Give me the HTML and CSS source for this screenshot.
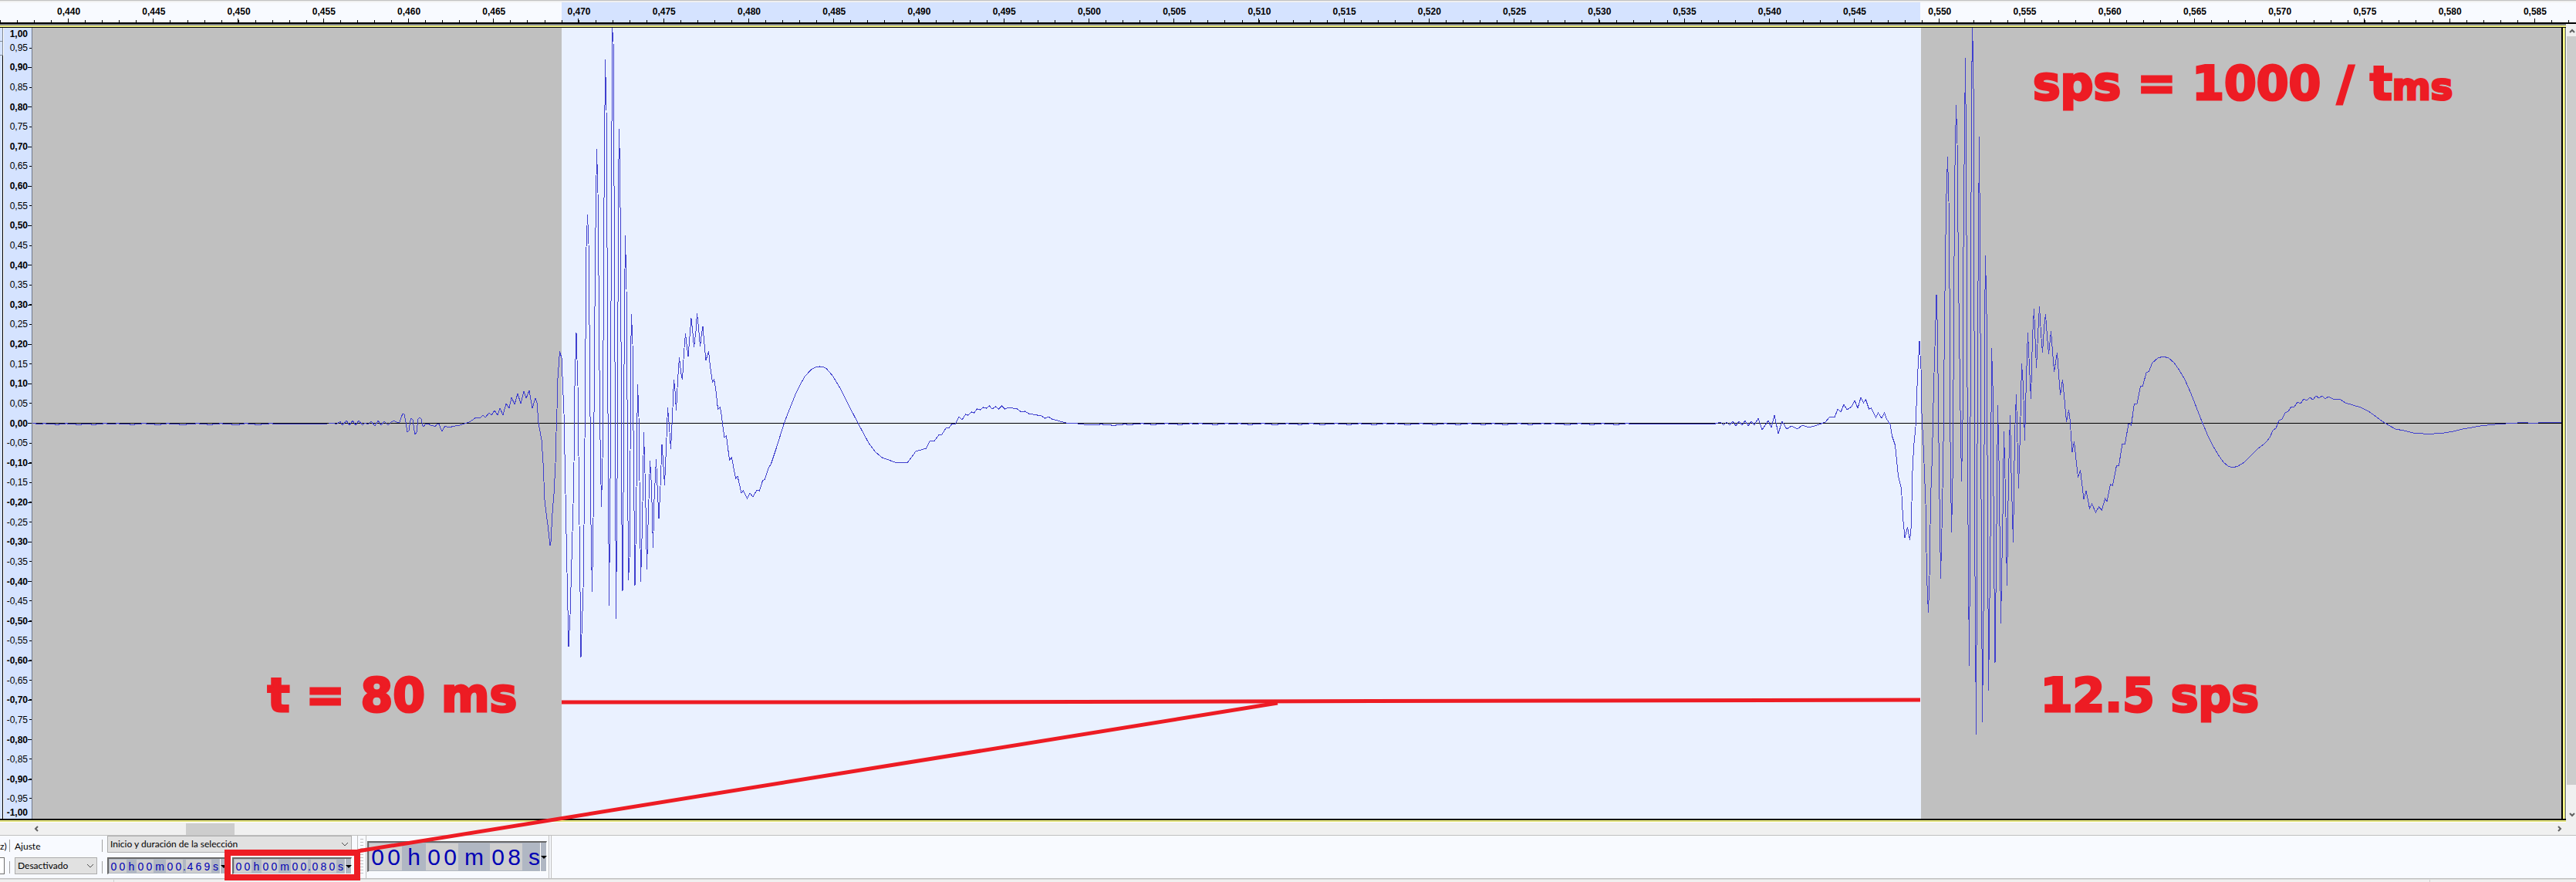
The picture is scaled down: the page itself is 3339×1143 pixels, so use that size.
FILE: index.html
```html
<!DOCTYPE html>
<html lang="es">
<head>
<meta charset="utf-8">
<meta name="viewport" content="width=device-width, initial-scale=1">
<title>Forma de onda</title>
<link rel="stylesheet" href="styles.css">
</head>
<body>
<div class="app">
  <header class="timeline">
    <ol class="time-labels">
      <li>0,440</li><li>0,445</li><li>0,450</li><li>0,455</li><li>0,460</li><li>0,465</li>
      <li>0,470</li><li>0,475</li><li>0,480</li><li>0,485</li><li>0,490</li><li>0,495</li>
      <li>0,500</li><li>0,505</li><li>0,510</li><li>0,515</li><li>0,520</li><li>0,525</li>
      <li>0,530</li><li>0,535</li><li>0,540</li><li>0,545</li><li>0,550</li><li>0,555</li>
      <li>0,560</li><li>0,565</li><li>0,570</li><li>0,575</li><li>0,580</li><li>0,585</li>
    </ol>
    <svg class="time-ticks" viewBox="0 0 3339 5" preserveAspectRatio="none" aria-hidden="true">
      <path d="M0 3.5H3339" stroke-width="3" stroke-dasharray="1 21.048"/>
      <path d="M88 2.5H3339" stroke-width="5" stroke-dasharray="1 109.24"/>
    </svg>
  </header>

  <main class="workspace">
    <div class="track-top"></div>
    <div class="track">
      <div class="track-panel"><span class="panel-box"></span><span class="panel-box"></span></div>
      <div class="level-ruler">
        <ol class="level-labels">
          <li>1,00</li><li>0,95</li><li>0,90</li><li>0,85</li><li>0,80</li><li>0,75</li><li>0,70</li>
          <li>0,65</li><li>0,60</li><li>0,55</li><li>0,50</li><li>0,45</li><li>0,40</li><li>0,35</li>
          <li>0,30</li><li>0,25</li><li>0,20</li><li>0,15</li><li>0,10</li><li>0,05</li><li>0,00</li>
          <li>-0,05</li><li>-0,10</li><li>-0,15</li><li>-0,20</li><li>-0,25</li><li>-0,30</li><li>-0,35</li>
          <li>-0,40</li><li>-0,45</li><li>-0,50</li><li>-0,55</li><li>-0,60</li><li>-0,65</li><li>-0,70</li>
          <li>-0,75</li><li>-0,80</li><li>-0,85</li><li>-0,90</li><li>-0,95</li><li>-1,00</li>
        </ol>
        <svg class="level-ticks" viewBox="0 0 5 1025" preserveAspectRatio="none" aria-hidden="true">
          <path d="M3.5 25.5V1010" stroke-width="3" stroke-dasharray="1 24.6"/>
          <path d="M2.5 51V1000" stroke-width="5" stroke-dasharray="1 50.25"/>
        </svg>
      </div>
      <div class="plot">
        <svg class="wave" viewBox="42 36 3278 1025" preserveAspectRatio="none" role="img" aria-label="Forma de onda">
          <rect class="selection" x="728" y="36" width="1762" height="1025"/>
          <rect class="zero" x="42" y="548" width="3278" height="1"/>
          <path class="signal" d="M42 548.5h4v1h9v-1h4v1h12v1h5v-1h8v-1h3v1h11v1h7v-1h13v1h6v-1h9v-1h5v1h12v-1h4v1h14v1h6v-1h9v-1h6v1h11v1h8v-1h7v-1h4v1h13v1h9v-1h12v-1h5v1h10v1h7v-1h9v-1h4v1h12v1h10v-1h6v-1h5v1h9v1h8v-1h10v-1h5v1h9L426 549
          432 548 436 550 441 546 444 551 449 545 453 551 457 545 461 551 465 545 470 551 473 548 477 550 481 546 486 552 490 545 494 551 498 546 503 551 507 547 511 545 515 548 518 547 520 541 522 536 524 537 526 547 528 560 530 558 532 545 533 542 535 544 537 558 538 563 540 560 542 543 544 541 546 543 548 552 549 553 552 549 555 549 558 551 562 552 564 553 567 549 569 549 571 555 573 559 575 555 577 552 581 554 590 552 596 551 602 549 608 547 613 544 617 541 623 541 626 538 629 541 634 535 637 538 641 532 645 538 648 529 652 538 656 523 660 529 663 515 667 524 671 510 675 523 679 507 682 516 686 506 690 529 694 516 696 522 698 548 700 559 702 570 704 600 706 648 708 665 710 680 713 707 714 702 716 665 718 640 720 600 721 560 722 530 723 490 725.5 455 728 464 731 536 733 640 735 742 737 838 739 797 743 653 744 600 745 500 747 431 749 500 751 680 753 852 756 763 757.5 640 758.5 500 760 320 761.5 278 763 316 764 421 765 540 766 680 767.5 767 769 673 770 536 771.5 330 773.5 193 775 250 776 357 777.5 540 779.5 657 781.5 573 782.5 320 784.5 77 786 143 787 321 788 536 789.5 785 791 623 792 393 793 160 793.5 36 795 54 795.5 143 796.5 336 797.5 597 798.5 802 800 623 801 393 802 207 802.5 167 803.5 215 804.5 321 806 680 807 766 808 640 809.5 393 810.5 305 812 375 813 518 814.5 752 816.5 713 817.5 464 818.5 407 820 446 821.5 613 823 759 824.5 680 826 536 826.5 498 828 540 829 623 830.5 754 832.5 680 834.5 560 836.5 630 838.5 738 840 680 842.5 597 844.5 630 846.5 710 848 647 850.5 595 852.5 640 854 672 856 630 858 576 859.5 597 861.5 629 863.5 580 865.5 528 867.5 553 869.5 582 871.5 540 873.5 492 875 507 876.5 532 878.5 493 880.5 463 882.5 482 884.5 492 886.5 457 888.5 432 890.5 450 892 462 894 436 896 412.5 898 432 899.5 450 902 429 903.5 406 905.5 425 907.5 449 909.5 432 911 423 913 446 915 467 918.5 455 920.5 475 923.5 495 925.5 492 927.5 502 930.5 530 933.5 528 935.5 540 936.5 550 939 567 941.5 565 945.5 596 948.5 593 953.5 620 956 617 961 639 963.5 636 968.5 646 972 639 976 644 981 635 984.5 636 988.5 623 991.5 621 995.5 608 999.5 601 1006.5 580 1016.5 548 1023.5 530 1031.5 510 1037 499 1043 488 1051.5 479 1057 476 1062.5 475 1068 476 1071.5 478 1080 488 1090 505 1100 525 1112.5 549 1126.5 575 1135 586 1143.5 593 1160 599 1176 600 1187 585 1200.5 581 1205.5 571 1211.5 571 1216.5 564 1221 563 1226.5 554 1230.5 554 1234 549 1238.5 549 1243 540 1247 544 1251.5 537 1254.5 538 1259.5 534 1262.5 535 1266.5 530 1270.5 531 1274.5 528 1278.5 529 1282.5 526 1286 530 1290.5 527 1294.5 530 1298.5 526 1302.5 530 1307 528 1318.5 530 1324 534 1328.5 533 1333.5 536 1350 539 1354.5 542 1359 540 1363.5 543 1381.5 548 1396.5 549 1405 550
          L1416 550.5h9v-1h4v1h11v1h6v-1h9v-1h5v1h8v-1h10v-1h4v1h9v1h7v-1h11v-1h5v1h12v1h6v-1h9v-1h4v1h8v-1h5v1h13v1h7v-1h9v-1h5v1h12v-1h4v1h9v1h6v-1h11v-1h5v1h9v1h8v-1h10v-1h4v1h12v1h5v-1h9v-1h6v1h8v1h7v-1h12v-1h5v1h11v1h6v-1h9v-1h4v1h13v1h7v-1h8v-1h5v1h10v-1h4v1h9v1h8v-1h11v-1h5v1h12v1h6v-1h9v-1h4v1h11v1h7v-1h9v-1h5v1h12v1h6v-1h8v-1h4v1h10v1h7v-1h12v-1h5v1h9v1h6v-1h11v-1h4v1h9v-1h5v1h12v1h8v-1h9v-1h5v1h11v1h6v-1h9v-1h4v1h12v1h7v-1h8v-1h5v1h10L2222 549.5
          2230 547 2234 551 2238 547 2242 551 2246 546 2250 552 2254 546 2258 551 2262 545 2266 552 2270 546 2274 551 2279 542 2284 557 2288 551 2292 545 2296 554 2300 538 2305 562 2310 546 2316 556 2322 552 2330 556 2336 551 2345 554 2355 551 2366 547 2372 540 2378 541 2382 530 2386 534 2390 524 2394 531 2400 527
          2404 519 2408 529 2412 515 2415.5 522 2418.5 518 2422.5 530 2425.5 529 2431.5 541 2434.5 535 2439 542 2442.5 535 2445.5 543 2450 550 2452.5 565 2456.5 577 2460.5 617 2464.5 633 2466.5 670 2469 697 2472.5 683 2475.5 700 2477.5 680 2478.5 620 2480.5 580 2483 553 2485.5 487 2488 442 2490 478 2491 536 2493.5 587 2496 653 2497.5 747 2499.5 794 2501 747 2502.5 647 2504.5 590 2506.5 500 2508.5 432 2510 382 2511.5 429 2512.5 536 2514 647 2515.5 750 2517.5 663 2519 573 2520.5 414 2522.5 268 2524.5 203 2526 261 2527.5 429 2528 573 2529.5 690 2531.5 597 2532.5 393 2534 214 2535.5 136 2537 186 2538.5 357 2540.5 500 2542.5 624 2544 547 2545 321 2546 214 2547.5 75 2548.5 193 2549.5 411 2551 680 2552.5 863 2553.5 713 2554.5 382 2555.5 125 2556.5 36 2557.5 68 2558.5 160 2559 429 2560 747 2561.5 952 2562.5 730 2563.5 429 2565.5 177 2566.5 321 2568 647 2569.5 936 2571.5 747 2572.5 421 2573.5 331 2575 407 2576.5 680 2577.5 895 2580 697 2581 536 2581.5 451 2583 500 2584.5 713 2586 859 2588 680 2589.5 525 2591 597 2593.5 808 2596 667 2597.5 559 2599.5 640 2601.5 759 2603.5 613 2605.5 538 2607 613 2609.5 703 2611.5 563 2613.5 511 2615 573 2616.5 633 2619 540 2620.5 471 2622.5 500 2624.5 571 2626.5 489 2628.5 431 2630.5 475 2632.5 517 2634.5 436 2636.5 400 2638 439 2639.5 477 2642 425 2643.5 397 2645.5 432 2647.5 457 2649.5 425 2651.5 407 2653.5 436 2655.5 459 2658.5 429 2662.5 482 2666.5 457 2670.5 512 2673.5 492 2676 518 2678.5 547 2681.5 531 2683 543 2686 586 2688.5 572 2693.5 619 2696.5 609 2701 647 2704 636 2708.5 659 2711.5 653 2716.5 664 2720.5 657 2724.5 661 2728.5 646 2731 650 2735.5 628 2738.5 629 2743.5 603 2746.5 603 2751 575 2754.5 575 2759 549 2762.5 551 2766.5 523 2770 523 2774.5 501 2777.5 500 2782 483 2785.5 481 2790 470 2797 464 2804 462 2811 464 2818 470 2825 480 2832 492 2840 510 2847 528 2854 546 2862 565 2868 577 2875 589 2882 599 2888 604 2894 606 2901 604 2909 599 2917 591 2926 582 2930 579 2934 576 2938 572 2942 567 2946 558 2950 555 2954 545 2958 543 2962 535 2966 533 2970 527 2974 527 2978 521 2982 523 2986 517 2990 519 2994 515 2998 518 3002 513 3006 516 3010 513 3014 517 3018 514 3024 517 3034 518 3040 522 3050 525 3060 528 3070 533 3080 540 3088 546 3096 551 3105 556 3116 558 3128 561 3141 562 3155 562 3168 561 3180 559 3192 556 3204 554 3215 552 3228 550.5 3240 549.5 3256 548.5 3270 547.5 3284 548.5 3296 547.5 3320 547.5"/>
        </svg>
        <p class="note note-formula">sps = 1000 / t<small>ms</small></p>
        <p class="note note-time">t = 80 ms</p>
        <p class="note note-rate">12.5 sps</p>
      </div>
      <div class="track-edge"></div>
      <div class="vscroll">
        <svg class="arrow" viewBox="0 0 8 6" aria-hidden="true"><path d="M1 5L4 2L7 5"/></svg>
        <span class="vthumb"></span>
        <svg class="arrow" viewBox="0 0 8 6" aria-hidden="true"><path d="M1 1L4 4L7 1"/></svg>
      </div>
    </div>
    <div class="track-bottom"></div>
  </main>

  <div class="hscroll">
    <svg class="arrow-side" viewBox="0 0 6 8" aria-hidden="true"><path d="M5 1L2 4L5 7"/></svg>
    <span class="hthumb"></span>
    <svg class="arrow-side arrow-end" viewBox="0 0 6 8" aria-hidden="true"><path d="M1 1L4 4L1 7"/></svg>
  </div>

  <footer class="toolbar">
    <div class="selection-bar">
      <div class="col col-rate">
        <span class="caption">z)</span>
        <span class="rate-box"></span>
      </div>
      <div class="col col-divider"><i></i><i></i></div>
      <div class="col col-snap">
        <label class="caption" for="snap">Ajuste</label>
        <div class="select">
          <select id="snap"><option>Desactivado</option></select>
          <svg viewBox="0 0 10 6" aria-hidden="true"><path d="M1 1L5 5L9 1"/></svg>
        </div>
      </div>
      <div class="col col-divider"><i></i><i></i></div>
      <div class="col col-range">
        <div class="select">
          <select aria-label="Selección"><option>Inicio y duración de la selección</option></select>
          <svg viewBox="0 0 10 6" aria-hidden="true"><path d="M1 1L5 5L9 1"/></svg>
        </div>
        <div class="times">
          <div class="time" role="group" aria-label="Inicio">
            <b>0</b><b>0</b><i class="h">h</i><b>0</b><b>0</b><i class="m">m</i><b>0</b><b>0</b><i class="dot">.</i><b>4</b><b>6</b><b>9</b><i class="s">s</i><button type="button" aria-label="Formato"></button>
          </div>
          <div class="time marked" role="group" aria-label="Duración">
            <b>0</b><b>0</b><i class="h">h</i><b>0</b><b>0</b><i class="m">m</i><b>0</b><b>0</b><i class="dot">.</i><b>0</b><b>8</b><b>0</b><i class="s">s</i><button type="button" aria-label="Formato"></button>
          </div>
        </div>
      </div>
    </div>
    <div class="grip"></div>
    <div class="position-bar">
      <div class="time time-large" role="group" aria-label="Posición">
        <b>0</b><b>0</b><i class="h">h</i><b>0</b><b>0</b><i class="m">m</i><b>0</b><b>8</b><i class="s">s</i><button type="button" aria-label="Formato"></button>
      </div>
    </div>
  </footer>
  <div class="status"><span class="status-start"></span><span class="status-end"></span></div>

  <svg class="markup" viewBox="0 0 3339 1143" preserveAspectRatio="none" aria-hidden="true">
    <path d="M728 910H1168L2050 908L2489 907"/>
    <path d="M464 1103L1656 911"/>
  </svg>
</div>
</body>
</html>
```
FILE: styles.css
```css
* { box-sizing: border-box; }

body {
  margin: 0;
  background: #f0f0f0;
  color: #000;
  font: 12px/16px "Liberation Sans", Arial, sans-serif;
}

ol { margin: 0; padding: 0; list-style: none; }
svg { display: block; }

.app {
  position: relative;
  display: flex;
  flex-direction: column;
  min-height: 100vh;
  overflow: hidden;
}

/* Time ruler */
.timeline {
  display: flex;
  flex-direction: column;
  justify-content: space-between;
  height: 31px;
  border-top: 1px solid #c0c0c0;
  border-bottom: 2px solid #000;
  background: linear-gradient(90deg, #f8faff 21.8%, #d5e3ff 21.8% 74.54%, #f8faff 74.54%);
  box-shadow: inset 0 2px #f0f0f0;
}

.time-labels {
  display: flex;
  margin-right: -2px;
  padding: 6px 0 0 34px;
  font-weight: bold;
}

.time-labels li { flex: 1; text-align: center; }

.time-ticks { width: 100%; height: 5px; }
.time-ticks path, .level-ticks path { fill: none; stroke: #000; shape-rendering: crispEdges; }

/* Track */
.workspace { display: flex; flex: 1; flex-direction: column; min-height: 400px; }

.track-top {
  height: 5px;
  margin-right: 13px;
  background: linear-gradient(#5c6470 1px, #b4b4a8 1px 2px, #c8c86e 2px 3px, #ffff8c 3px 4px, #000 4px);
}

.track { display: flex; flex: 1; }

.track-panel {
  width: 4px;
  border-right: 1px solid #000;
  background: #d5e3ff;
}

.panel-box {
  display: block;
  width: 4px;
  height: 18px;
  border-right: 1px solid #808890;
  border-bottom: 1px solid #808890;
}

.level-ruler {
  display: flex;
  width: 38px;
  border-left: 1px solid #fff;
  border-right: 1px solid #70788c;
  background: #d5e3ff;
}

.level-labels {
  display: flex;
  flex: 1;
  flex-direction: column;
  height: 100%;
  text-align: right;
}

.level-labels li {
  display: flex;
  flex: 1 1 0;
  align-items: center;
  justify-content: flex-end;
  min-height: 0;
}

.level-labels li:nth-child(odd) { font-weight: bold; }
.level-labels li:first-child { flex-grow: .5; align-items: flex-start; }
.level-labels li:last-child { flex-grow: .5; align-items: flex-end; }

.level-ticks { width: 5px; height: 100%; }

.plot { position: relative; flex: 1; background: #c0c0c0; }
.wave { position: absolute; width: 100%; height: 100%; }
.selection { fill: #eaf1ff; }
.zero { fill: #000; }

.signal {
  fill: none;
  stroke: #3f3fce;
  stroke-width: 1;
  shape-rendering: crispEdges;
  vector-effect: non-scaling-stroke;
}

.track-edge {
  width: 7px;
  background: linear-gradient(90deg, #000 2px, #ffff8c 2px 4px, #c8c86e 4px 5px, #70788c 5px 6px, #fff 6px);
}

.track-bottom {
  height: 5px;
  margin-right: 13px;
  background: linear-gradient(#000 2px, #ffff8c 2px 3px, #d8d878 3px 4px, #fff 4px);
}

/* Scroll bars */
.vscroll {
  display: flex;
  flex-direction: column;
  justify-content: space-between;
  width: 12px;
  margin-top: -5px;
  padding: 6px 0 2px;
  background: #f0f0f0;
}

.vthumb { flex: 1; margin: 4px 0 36px; background: #cdcdcd; }
.arrow { width: 8px; height: 6px; margin-left: 3px; }
.arrow-side { width: 6px; height: 8px; }

.arrow path, .arrow-side path { fill: none; stroke: #606060; stroke-width: 2; }

.hscroll {
  display: flex;
  align-items: center;
  height: 17px;
  padding: 0 18px 0 44px;
  border-bottom: 1px solid #c0c0c0;
  background: #f0f0f0;
}

.hthumb { width: 63px; height: 15px; margin-left: 191px; background: #cdcdcd; }
.arrow-end { margin-left: auto; }

/* Toolbars */
.toolbar {
  display: flex;
  height: 56px;
  border-bottom: 1px solid #c0c0c0;
  background: #f8faff;
  font: 12px/22px Lato, "Open Sans", sans-serif;
}

.selection-bar {
  display: flex;
  width: 464px;
  border-right: 1px solid #c0c0c0;
}

.col { display: flex; flex-direction: column; gap: 6px; }
.col-rate { width: 12px; }
.col-divider { width: 7px; gap: 12px; padding-top: 5px; }
.col-divider i { width: 1px; height: 16px; background: #a0a0a0; }
.col-snap { width: 113px; padding-right: 6px; }
.col-range { width: 317px; }
.caption { height: 22px; padding-top: 3px; }

.rate-box {
  width: 6px;
  height: 22px;
  border: 1px solid #707070;
  border-left: 0;
  background: #fff;
}

.select { position: relative; height: 22px; }

.select select {
  width: 100%;
  height: 22px;
  padding: 0 20px 0 3px;
  border: 1px solid #adadad;
  border-radius: 0;
  background: #e1e1e1;
  color: #000;
  font: inherit;
  line-height: 20px;
  appearance: none;
}

.select svg { position: absolute; top: 8px; right: 4px; width: 10px; height: 6px; }
.select path { fill: none; stroke: #505050; }

.times { display: flex; gap: 7px; }

.time {
  position: relative;
  display: flex;
  width: 155px;
  height: 22px;
  padding: 1px 0 1px 1px;
  border: 2px solid;
  border-width: 2px 1px 1px 2px;
  border-color: #696969 #fff #fff #696969;
  background: #b0b7c3;
  color: #0000b4;
  font: 14px/18px "Liberation Sans", Arial, sans-serif;
  text-align: center;
}

.time b, .time i { font-style: normal; font-weight: normal; }
.time b { width: 11px; background: #cfcfcf; }
.time .h { width: 13px; }
.time .m { width: 16px; }
.time .dot { width: 4px; }
.time .s { flex: 1; }

.time button {
  width: 8px;
  margin: -1px 0;
  padding: 0;
  border: 0;
  border-left: 1px solid #fff;
  background: #b0b7c3;
}

.time button::before {
  content: "";
  display: block;
  border: 4px solid transparent;
  border-top-color: #000;
  border-bottom: 0;
}

/* Highlight drawn round the duration field */
.marked::after {
  content: "";
  position: absolute;
  inset: -12px -12px -9px -12px;
  border: 8px solid #ed1c24;
}

.grip {
  width: 10px;
  margin: 4px 0;
  background: repeating-linear-gradient(#c0c0c0 0 1px, transparent 1px 4px) 3px 0 / 4px 100% no-repeat;
}

.position-bar {
  width: 238px;
  padding: 7px 2px 0 1px;
  border: solid #c0c0c0;
  border-width: 0 1px;
  box-shadow: 2px 0 #f8faff, 3px 0 #c0c0c0;
}

.time-large {
  width: 233px;
  height: 40px;
  font-size: 30px;
  line-height: 36px;
}

.time-large b { width: 21px; }
.time-large .h { width: 31px; }
.time-large .m { width: 41px; }
.time-large .s { text-align: right; }

.status {
  display: flex;
  justify-content: space-between;
  height: 4px;
  padding: 0 189px 0 147px;
  border-top: 1px solid #d8d8d8;
  background: #f0f0f0;
}

.status span { width: 1px; background: #d0d0d0; }

/* Annotations */
.note {
  position: absolute;
  margin: 0;
  color: #ed1c24;
  font: bold 60px/80px "DejaVu Sans", sans-serif;
  white-space: nowrap;
  -webkit-text-stroke: 3px #ed1c24;
}

.note small { font-size: 48px; }
.note-formula { top: 3.1%; left: 79.1%; }
.note-time { top: 80.5%; left: 9.3%; }
.note-rate { top: 80.5%; left: 79.4%; }

.markup {
  position: absolute;
  inset: 0;
  width: 100%;
  height: 100%;
  pointer-events: none;
}

.markup path { fill: none; stroke: #ed1c24; stroke-width: 5; }
```
